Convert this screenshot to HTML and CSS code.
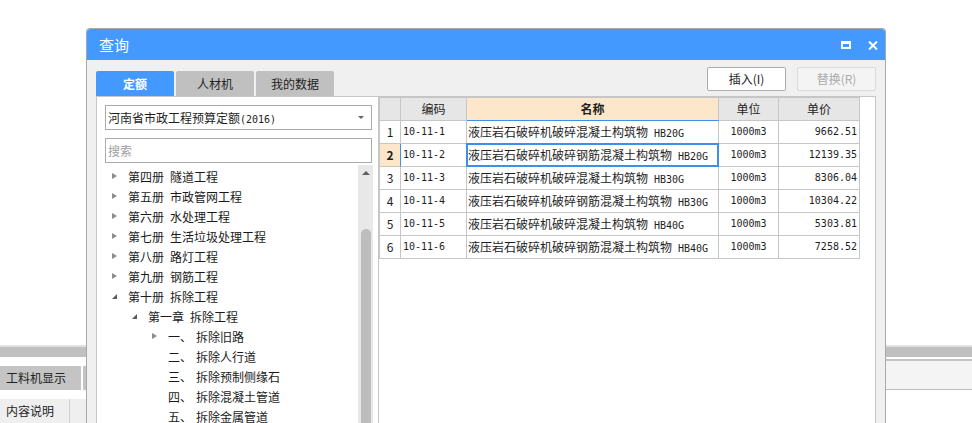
FILE: index.html
```html
<!DOCTYPE html>
<html lang="zh-CN">
<head>
<meta charset="utf-8">
<title>查询</title>
<link rel="stylesheet" href="styles.css">
</head>
<body>
<div class="app">
  <div class="app-top"></div>
  <div class="app-band"></div>
  <div class="app-tabs">
    <div class="app-tabs-left">
      <div class="app-tab">工料机显示</div>
      <div class="app-tab app-tab-next"></div>
    </div>
    <div class="app-tabs-right"></div>
  </div>
  <div class="app-info">
    <div class="app-info-left">
      <div class="info-cell">内容说明</div>
      <div class="info-cell info-cell-next"></div>
    </div>
    <div class="app-info-right"></div>
  </div>
</div>

<div class="dialog">
  <div class="titlebar">
    <span class="title">查询</span>
    <span class="title-icons">
      <span class="ico-max"></span>
      <svg class="ico-close" width="10" height="9" viewBox="0 0 10 9"><path d="M1 0.5 L9 8.5 M9 0.5 L1 8.5" stroke="#fff" stroke-width="2" fill="none"/></svg>
    </span>
  </div>

  <div class="toolbar">
    <div class="tabs">
      <div class="tab active">定额</div>
      <div class="tab">人材机</div>
      <div class="tab">我的数据</div>
    </div>
    <div class="buttons">
      <div class="btn">插入(I)</div>
      <div class="btn disabled">替换(R)</div>
    </div>
  </div>

  <div class="panes">
    <div class="pane-left">
      <div class="combo">
        <span class="combo-text">河南省市政工程预算定额<span class="lat">(2016)</span></span>
        <span class="combo-arrow"></span>
      </div>
      <div class="search">搜索</div>
      <div class="tree-area">
        <div class="tree">
          <div class="node l0"><span class="tw closed"></span>第四册&ensp;隧道工程</div>
          <div class="node l0"><span class="tw closed"></span>第五册&ensp;市政管网工程</div>
          <div class="node l0"><span class="tw closed"></span>第六册&ensp;水处理工程</div>
          <div class="node l0"><span class="tw closed"></span>第七册&ensp;生活垃圾处理工程</div>
          <div class="node l0"><span class="tw closed"></span>第八册&ensp;路灯工程</div>
          <div class="node l0"><span class="tw closed"></span>第九册&ensp;钢筋工程</div>
          <div class="node l0"><span class="tw open"></span>第十册&ensp;拆除工程</div>
          <div class="node l1"><span class="tw open"></span>第一章&ensp;拆除工程</div>
          <div class="node l2"><span class="tw closed"></span><span class="num">一、</span>拆除旧路</div>
          <div class="node l2"><span class="tw"></span><span class="num">二、</span>拆除人行道</div>
          <div class="node l2"><span class="tw"></span><span class="num">三、</span>拆除预制侧缘石</div>
          <div class="node l2"><span class="tw"></span><span class="num">四、</span>拆除混凝土管道</div>
          <div class="node l2"><span class="tw"></span><span class="num">五、</span>拆除金属管道</div>
        </div>
        <div class="vscroll">
          <span class="vs-up"></span>
          <span class="vs-thumb"></span>
        </div>
      </div>
    </div>

    <div class="pane-right">
      <div class="grid">
        <div class="hc">&nbsp;</div>
        <div class="hc">编码</div>
        <div class="hc hc-sel">名称</div>
        <div class="hc">单位</div>
        <div class="hc">单价</div>

        <div class="c rn">1</div>
        <div class="c code">10-11-1</div>
        <div class="c name">液压岩石破碎机破碎混凝土构筑物<span class="lat"> HB20G</span></div>
        <div class="c unit">1000m3</div>
        <div class="c price">9662.51</div>

        <div class="c rn rn-sel">2</div>
        <div class="c code">10-11-2</div>
        <div class="c name sel">液压岩石破碎机破碎钢筋混凝土构筑物<span class="lat"> HB20G</span></div>
        <div class="c unit">1000m3</div>
        <div class="c price">12139.35</div>

        <div class="c rn">3</div>
        <div class="c code">10-11-3</div>
        <div class="c name">液压岩石破碎机破碎混凝土构筑物<span class="lat"> HB30G</span></div>
        <div class="c unit">1000m3</div>
        <div class="c price">8306.04</div>

        <div class="c rn">4</div>
        <div class="c code">10-11-4</div>
        <div class="c name">液压岩石破碎机破碎钢筋混凝土构筑物<span class="lat"> HB30G</span></div>
        <div class="c unit">1000m3</div>
        <div class="c price">10304.22</div>

        <div class="c rn">5</div>
        <div class="c code">10-11-5</div>
        <div class="c name">液压岩石破碎机破碎混凝土构筑物<span class="lat"> HB40G</span></div>
        <div class="c unit">1000m3</div>
        <div class="c price">5303.81</div>

        <div class="c rn">6</div>
        <div class="c code">10-11-6</div>
        <div class="c name">液压岩石破碎机破碎钢筋混凝土构筑物<span class="lat"> HB40G</span></div>
        <div class="c unit">1000m3</div>
        <div class="c price">7258.52</div>
      </div>
    </div>
  </div>
</div>
</body>
</html>
```

FILE: styles.css
```css
* { box-sizing: border-box; }

html, body {
  margin: 0;
  padding: 0;
  width: 972px;
  height: 423px;
  overflow: hidden;
  background: #ffffff;
  font-family: "Noto Sans CJK SC", "Noto Sans", sans-serif;
  font-size: 12px;
  color: #1e1e1e;
}

body { position: relative; }

.lat {
  font-family: "DejaVu Sans Mono", "Liberation Mono", monospace;
  font-size: 10px;
  white-space: pre;
}

/* ---------- background application ---------- */
.app-top { height: 345px; background: #ffffff; }

.app-band {
  height: 12px;
  border-top: 2px solid #e2e2e2;
  background: #c0c0c0;
}

.app-tabs { display: flex; height: 33px; }

.app-tabs-left {
  width: 86px;
  display: flex;
  align-items: flex-end;
  background: #ffffff;
}

.app-tab {
  width: 81px;
  height: 24px;
  line-height: 24px;
  padding-left: 6px;
  background: #c4c4c4;
  font-size: 12px;
  color: #222;
}

.app-tab-next { width: 3px; margin-left: 2px; padding: 0; }

.app-tabs-right {
  flex: 1;
  margin-top: 2px;
  height: 31px;
  border-top: 2px solid #c4c4c4;
  border-bottom: 1px solid #bdbdbd;
  background: #f4f4f4;
}

.app-info { display: flex; height: 33px; }

.app-info-left {
  width: 86px;
  display: flex;
  align-items: flex-end;
  background: #ffffff;
}

.info-cell {
  width: 70px;
  height: 24px;
  line-height: 24px;
  padding-left: 6px;
  background: #efefef;
  border-right: 1px solid #d0d0d0;
  font-size: 12px;
  color: #222;
}

.info-cell-next { flex: 1; border-right: none; }

.app-info-right { flex: 1; background: #ffffff; }

/* ---------- dialog ---------- */
.dialog {
  position: absolute;
  left: 86px;
  top: 28px;
  bottom: 0;
  width: 800px;
  border: 1px solid #a8a8a8;
  border-bottom: none;
  border-radius: 4px 4px 0 0;
  background: #f0f0f0;
  display: flex;
  flex-direction: column;
  overflow: hidden;
}

.titlebar {
  height: 31px;
  flex: none;
  background: #4499ff;
  border-radius: 3px 3px 0 0;
  display: flex;
  align-items: center;
  justify-content: space-between;
  padding: 0 7px 0 12px;
}

.title {
  color: #ffffff;
  font-size: 15px;
  line-height: 20px;
}

.title-icons {
  display: flex;
  align-items: center;
  gap: 17px;
  margin-top: 1px;
}

.ico-max {
  width: 10px;
  height: 8px;
  border: 2px solid #ffffff;
  border-top-width: 3px;
}

.ico-close { display: block; }

.toolbar {
  height: 36px;
  flex: none;
  display: flex;
  justify-content: space-between;
  padding: 0 9px;
}

.tabs {
  display: flex;
  gap: 2px;
  align-self: flex-end;
}

.tab {
  width: 78px;
  height: 25px;
  line-height: 25px;
  text-align: center;
  background: #c0c0c0;
  border-radius: 2px 2px 0 0;
  font-size: 12px;
  color: #222;
}

.tab.active {
  background: #4499ff;
  color: #ffffff;
  font-weight: bold;
}

.buttons {
  display: flex;
  gap: 11px;
  margin-top: 7px;
}

.btn {
  width: 79px;
  height: 24px;
  line-height: 22px;
  text-align: center;
  background: #ffffff;
  border: 1px solid #adadad;
  border-radius: 2px;
  font-size: 12px;
  color: #222;
}

.btn.disabled {
  background: #f4f4f4;
  border-color: #dadada;
  color: #ababab;
}

.panes {
  flex: 1;
  display: flex;
  padding: 0 9px;
  min-height: 0;
}

/* ---------- left pane ---------- */
.pane-left {
  width: 283px;
  background: #ffffff;
  border: 1px solid #c6c6c6;
  border-bottom: none;
  display: flex;
  flex-direction: column;
}

.combo {
  margin: 8px 0 0 8px;
  width: 267px;
  height: 25px;
  border: 1px solid #ababab;
  display: flex;
  align-items: center;
  justify-content: space-between;
  padding: 0 7px 0 2px;
}

.combo-text { font-size: 12px; color: #1e1e1e; }

.combo-arrow {
  width: 0;
  height: 0;
  border-left: 3px solid transparent;
  border-right: 3px solid transparent;
  border-top: 3px solid #666;
}

.search {
  margin: 8px 0 0 8px;
  width: 267px;
  height: 25px;
  line-height: 23px;
  border: 1px solid #ababab;
  padding-left: 2px;
  color: #a0a0a0;
  font-size: 12px;
}

.tree-area {
  flex: 1;
  display: flex;
  margin-top: 2px;
  min-height: 0;
}

.tree {
  flex: 1;
  padding-top: 1px;
  overflow: hidden;
}

.node {
  height: 20px;
  display: flex;
  align-items: center;
  white-space: nowrap;
  font-size: 12px;
  color: #1a1a1a;
}

.node.l0 { padding-left: 15px; }
.node.l1 { padding-left: 35px; }
.node.l2 { padding-left: 55px; }

.tw {
  width: 16px;
  height: 20px;
  flex: none;
  position: relative;
}

.tw.closed::before {
  content: "";
  position: absolute;
  left: 0;
  top: 7px;
  border-left: 5px solid #8c8c8c;
  border-top: 3px solid transparent;
  border-bottom: 3px solid transparent;
}

.tw.open::before {
  content: "";
  position: absolute;
  left: 0;
  top: 8px;
  border-bottom: 5px solid #595959;
  border-left: 5px solid transparent;
}

.num { width: 28px; flex: none; }

.vscroll {
  width: 15px;
  margin-right: 5px;
  background: #e8e8e8;
  display: flex;
  flex-direction: column;
  align-items: center;
}

.vs-up {
  margin-top: 6px;
  width: 0;
  height: 0;
  border-left: 4px solid transparent;
  border-right: 4px solid transparent;
  border-bottom: 4px solid #606060;
}

.vs-thumb {
  margin-top: 54px;
  width: 10px;
  flex: 1;
  background: #bdbdbd;
  border-radius: 5px 5px 0 0;
}

/* ---------- right pane / grid ---------- */
.pane-right {
  flex: 1;
  background: #ffffff;
  border-top: 1px solid #c6c6c6;
  border-right: 1px solid #c6c6c6;
}

.grid {
  display: grid;
  grid-template-columns: 21px 66px 252px 60px 81px;
  grid-auto-rows: 23px;
  width: 481px;
  border-left: 1px solid #c6c6c6;
  border-top: 1px solid #c6c6c6;
}

.hc, .c {
  border-right: 1px solid #c6c6c6;
  border-bottom: 1px solid #c6c6c6;
  line-height: 22px;
  font-size: 12px;
  white-space: nowrap;
  overflow: hidden;
}

.hc {
  background: #e6e6e6;
  text-align: center;
  color: #1e1e1e;
}

.hc-sel {
  background: #fde7ca;
  font-weight: bold;
  border-bottom-color: #3d8fe8;
}

.c { background: #ffffff; }

.rn { text-align: center; }

.rn-sel {
  background: #fde7ca;
  font-weight: bold;
  border-right-color: #3d8fe8;
}

.code {
  padding-left: 2px;
  font-family: "DejaVu Sans Mono", "Liberation Mono", monospace;
  font-size: 10px;
}

.name { padding-left: 1px; }

.name.sel { position: relative; overflow: visible; }

.name.sel::after {
  content: "";
  position: absolute;
  left: -1px;
  top: -1px;
  right: -1px;
  bottom: -1px;
  border: 2px solid #3d8fe8;
}

.unit {
  text-align: center;
  font-family: "DejaVu Sans Mono", "Liberation Mono", monospace;
  font-size: 10px;
}

.price {
  text-align: right;
  padding-right: 2px;
  font-family: "DejaVu Sans Mono", "Liberation Mono", monospace;
  font-size: 10px;
}
```
